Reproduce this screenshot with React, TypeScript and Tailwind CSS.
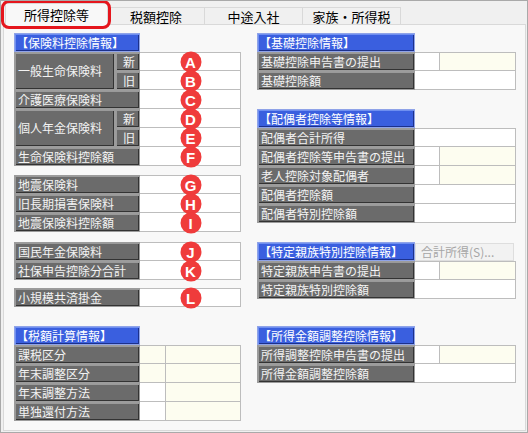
import React from 'react';

type CellSpec = { w: string; ivory?: boolean };

const Label: React.FC<{ children?: React.ReactNode; className?: string }> = ({ children, className = '' }) => (
  <div
    className={`flex items-center pl-[3px] bg-[#6b6b6b] text-[#f3f3f3] text-[12px] leading-none border border-[#9c9c9c] shadow-[inset_1px_1px_0_#9a9a9a,inset_-1px_-1px_0_#333333] whitespace-nowrap overflow-hidden ${className}`}
  >
    {children}
  </div>
);

const Header: React.FC<{ children: React.ReactNode; className?: string }> = ({ children, className = '' }) => (
  <div
    className={`h-[19px] flex items-center pl-[1px] bg-[#3a5fdf] text-white text-[12px] leading-none border border-[#8fa3e8] shadow-[inset_1px_1px_0_#6f8ff0,inset_-1px_-1px_0_#1c318c] whitespace-nowrap ${className}`}
  >
    {children}
  </div>
);

const Badge: React.FC<{ letter: string }> = ({ letter }) => (
  <div className="absolute left-1/2 top-1/2 -translate-x-1/2 -translate-y-1/2 w-[21px] h-[21px] rounded-full bg-[#ef3b3b] text-white flex items-center justify-center text-[15px] font-bold leading-none font-['Liberation_Sans',Arial,sans-serif] z-10">
    {letter}
  </div>
);

const Cells: React.FC<{ cells: CellSpec[]; first?: boolean; badge?: string; h?: string }> = ({ cells, first, badge, h = 'h-[19px]' }) => (
  <div className={`relative flex ${h}`}>
    {cells.map((c, i) => (
      <div
        key={i}
        className={`${c.w} h-full border-b border-r border-[#bdbdbd] ${first ? 'border-t' : ''} ${c.ivory ? 'bg-[#fdfdf0]' : 'bg-white'}`}
      />
    ))}
    {badge && <Badge letter={badge} />}
  </div>
);

const Row: React.FC<{ label: string; lw: string; cells: CellSpec[]; first?: boolean; badge?: string }> = ({ label, lw, cells, first, badge }) => (
  <div className="flex h-[19px]">
    <Label className={`${lw} h-[19px]`}>{label}</Label>
    <Cells cells={cells} first={first} badge={badge} />
  </div>
);

const SplitRow: React.FC<{ label: string; first?: boolean; badges: [string, string] }> = ({ label, first, badges }) => (
  <div className="flex h-[38px]">
    <Label className="w-[101px] h-[38px]">{label}</Label>
    <div className="flex flex-col">
      <div className="flex h-[19px]">
        <Label className="w-[25px] h-[19px] justify-center pl-0">新</Label>
        <Cells cells={[{ w: 'w-[101px]' }]} first={first} badge={badges[0]} />
      </div>
      <div className="flex h-[19px]">
        <Label className="w-[25px] h-[19px] justify-center pl-0">旧</Label>
        <Cells cells={[{ w: 'w-[101px]' }]} badge={badges[1]} />
      </div>
    </div>
  </div>
);

const L = 'w-[126px]';
const R = 'w-[158px]';
const one = [{ w: 'w-[101px]' }];
const splitL = (a: boolean, b: boolean) => [
  { w: 'w-[26px]', ivory: a },
  { w: 'w-[75px]', ivory: b },
];
const splitR = [{ w: 'w-[25px]' }, { w: 'w-[76px]', ivory: true }];

const tabs = [
  { name: '税額控除', w: 'w-[97px]' },
  { name: '中途入社', w: 'w-[98px]' },
  { name: '家族・所得税', w: 'w-[98px]' },
];

export default function App() {
  return (
    <div className="relative w-[528px] h-[433px] bg-[#f0f0f0] border border-[#a9a9a9] font-['Noto_Sans_CJK_JP',sans-serif] text-black overflow-hidden">
      {/* tabs */}
      <div className="flex items-end h-[23px] pl-[4px]">
        <div className="w-[103px] h-[22px] bg-[#f8f8f8] border border-b-0 border-[#d9d9d9] flex items-center justify-center text-[13px] leading-none relative z-10 -mb-px">
          所得控除等
        </div>
        {tabs.map((t) => (
          <div
            key={t.name}
            className={`${t.w} h-[17px] bg-[#f0f0f0] border border-b-0 border-l-0 border-[#d9d9d9] flex items-center justify-center text-[13px] leading-none`}
          >
            {t.name}
          </div>
        ))}
      </div>

      {/* panel */}
      <div className="ml-[2px] w-[523px] h-[407px] bg-[#f8f8f8] border border-[#d9d9d9] pl-[10px] pt-[8px] flex gap-[16px]">
        {/* left column */}
        <div className="w-[227px] flex flex-col">
          <Header className={L}>【保険料控除情報】</Header>
          <SplitRow label="一般生命保険料" first badges={['A', 'B']} />
          <Row label="介護医療保険料" lw={L} cells={one} badge="C" />
          <SplitRow label="個人年金保険料" badges={['D', 'E']} />
          <Row label="生命保険料控除額" lw={L} cells={one} badge="F" />

          <div className="h-[9px]" />
          <Row label="地震保険料" lw={L} cells={one} first badge="G" />
          <Row label="旧長期損害保険料" lw={L} cells={one} badge="H" />
          <Row label="地震保険料控除額" lw={L} cells={one} badge="I" />

          <div className="h-[10px]" />
          <Row label="国民年金保険料" lw={L} cells={one} first badge="J" />
          <Row label="社保申告控除分合計" lw={L} cells={one} badge="K" />

          <div className="h-[8px]" />
          <Row label="小規模共済掛金" lw={L} cells={one} first badge="L" />

          <div className="h-[19px]" />
          <Header className={L}>【税額計算情報】</Header>
          <Row label="課税区分" lw={L} cells={splitL(true, true)} first />
          <Row label="年末調整区分" lw={L} cells={splitL(true, true)} />
          <Row label="年末調整方法" lw={L} cells={splitL(false, true)} />
          <Row label="単独還付方法" lw={L} cells={splitL(false, true)} />
        </div>

        {/* right column */}
        <div className="w-[259px] flex flex-col">
          <Header className={R}>【基礎控除情報】</Header>
          <Row label="基礎控除申告書の提出" lw={R} cells={splitR} first />
          <Row label="基礎控除額" lw={R} cells={one} />

          <div className="h-[19px]" />
          <Header className={R}>【配偶者控除等情報】</Header>
          <Row label="配偶者合計所得" lw={R} cells={one} first />
          <Row label="配偶者控除等申告書の提出" lw={R} cells={splitR} />
          <Row label="老人控除対象配偶者" lw={R} cells={splitR} />
          <Row label="配偶者控除額" lw={R} cells={one} />
          <Row label="配偶者特別控除額" lw={R} cells={one} />

          <div className="h-[19px]" />
          <div className="flex items-center">
            <Header className={R}>【特定親族特別控除情報】</Header>
            <div className="w-[99px] h-[18px] bg-[#f2f2f2] border border-[#dedede] text-[#a6a6a6] text-[12px] leading-none flex items-center pl-[5px] whitespace-nowrap">
              合計所得(S)...
            </div>
          </div>
          <Row label="特定親族申告書の提出" lw={R} cells={splitR} first />
          <Row label="特定親族特別控除額" lw={R} cells={one} />

          <div className="h-[27px]" />
          <Header className={R}>【所得金額調整控除情報】</Header>
          <Row label="所得調整控除申告書の提出" lw={R} cells={splitR} first />
          <Row label="所得金額調整控除額" lw={R} cells={one} />
        </div>
      </div>

      {/* highlight */}
      <div className="absolute left-0 top-[-1px] w-[110px] h-[29px] border-[3px] border-[#e5161d] rounded-[8px] z-20" />
    </div>
  );
}
